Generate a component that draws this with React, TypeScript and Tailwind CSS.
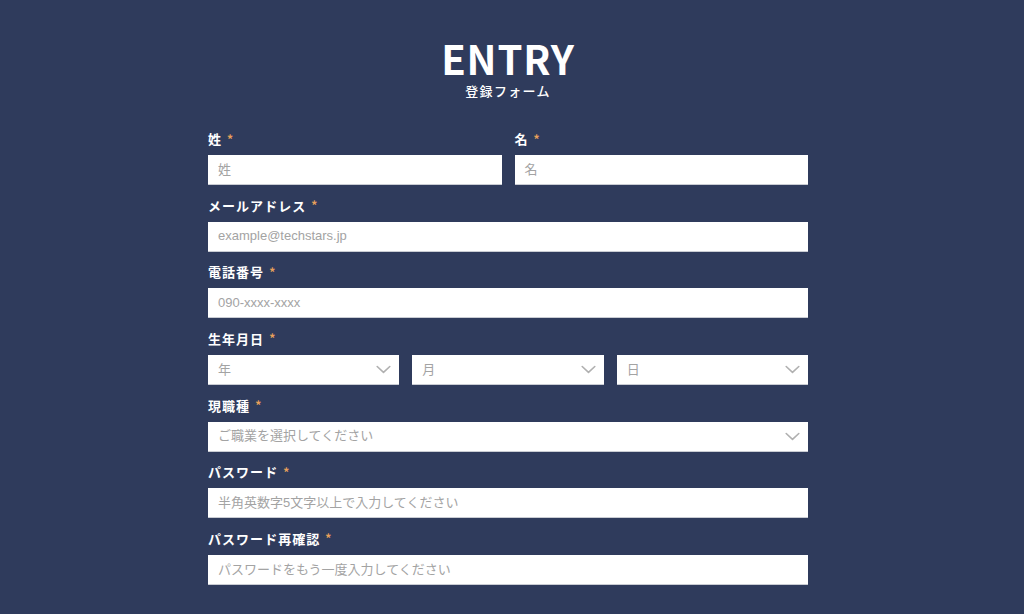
import React from "react";

const font = { fontFamily: '"Noto Sans CJK JP", "Noto Sans", sans-serif' };
const phFont = { fontFamily: '"Liberation Sans", "Noto Sans CJK JP", sans-serif' };

function Label({ text }: { text: string }) {
  return (
    <div className="flex items-center h-[17px] mb-[8px] text-[13px] font-bold text-white leading-none tracking-[0.08em]">
      <span>{text}</span>
      <span className="ml-[5px] text-[#e8a05a] text-[12px]">*</span>
    </div>
  );
}

function Input({ placeholder }: { placeholder: string }) {
  return (
    <div className="h-[30px] bg-white border-b border-[#c9ccd3] flex items-center pl-[10px] text-[13px] text-[#a3a3a3]" style={phFont}>
      {placeholder}
    </div>
  );
}

function Chevron() {
  return (
    <svg width="15" height="9" viewBox="0 0 15 9" fill="none">
      <path d="M1.2 1.5 L7.5 7.3 L13.8 1.5" stroke="#b0b0b0" strokeWidth="1.6" strokeLinecap="round" strokeLinejoin="round" />
    </svg>
  );
}

function Select({ placeholder }: { placeholder: string }) {
  return (
    <div className="h-[30px] bg-white border-b border-[#c9ccd3] flex items-center justify-between pl-[10px] pr-[8px] text-[13px] text-[#a3a3a3]" style={phFont}>
      <span>{placeholder}</span>
      <Chevron />
    </div>
  );
}

export default function App() {
  return (
    <div className="w-[1024px] h-[614px] bg-[#2f3b5c] overflow-hidden" style={font}>
      <div className="w-[1016px]">
        <div className="flex flex-col items-center pt-[36px]">
          <div className="text-white text-[40px] font-bold leading-[44px] tracking-[0.02em]">ENTRY</div>
          <div className="text-white text-[13px] font-medium leading-[18px] mt-[2px] tracking-[0.1em]">登録フォーム</div>
        </div>
        <div className="w-[600px] mx-auto mt-[30px] flex flex-col gap-[11.67px]">
          <div className="grid grid-cols-2 gap-[13px]">
            <div>
              <Label text="姓" />
              <Input placeholder="姓" />
            </div>
            <div>
              <Label text="名" />
              <Input placeholder="名" />
            </div>
          </div>
          <div>
            <Label text="メールアドレス" />
            <Input placeholder="example@techstars.jp" />
          </div>
          <div>
            <Label text="電話番号" />
            <Input placeholder="090-xxxx-xxxx" />
          </div>
          <div>
            <Label text="生年月日" />
            <div className="grid grid-cols-3 gap-[13px]">
              <Select placeholder="年" />
              <Select placeholder="月" />
              <Select placeholder="日" />
            </div>
          </div>
          <div>
            <Label text="現職種" />
            <Select placeholder="ご職業を選択してください" />
          </div>
          <div>
            <Label text="パスワード" />
            <Input placeholder="半角英数字5文字以上で入力してください" />
          </div>
          <div>
            <Label text="パスワード再確認" />
            <Input placeholder="パスワードをもう一度入力してください" />
          </div>
        </div>
      </div>
    </div>
  );
}
